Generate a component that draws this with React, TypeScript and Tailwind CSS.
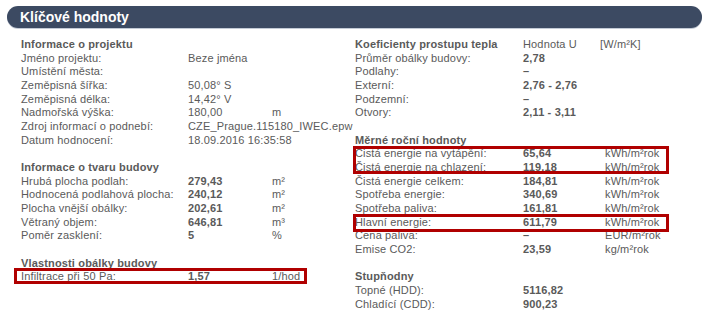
import type { ReactNode } from "react"

type RowProps = {
  label: ReactNode
  value?: ReactNode
  unit?: ReactNode
  bold?: boolean
  labelW: string
  valueW: string
}

function Row({ label, value, unit, bold, labelW, valueW }: RowProps) {
  return (
    <div className="flex h-[13.67px] items-center whitespace-nowrap">
      <div className={labelW}>{label}</div>
      <div className={`${valueW} ${bold ? "font-bold" : ""}`}>{value}</div>
      <div>{unit}</div>
    </div>
  )
}

function Heading({ children }: { children: ReactNode }) {
  return <div className="flex h-[13.67px] items-center whitespace-nowrap font-bold">{children}</div>
}

const Blank = () => <div className="h-[13.67px]" />

// red annotation frame laid over a group of rows
function Marked({ children, frame }: { children: ReactNode; frame: string }) {
  return (
    <div className="relative">
      {children}
      <div className={`pointer-events-none absolute border-[3px] border-[#b00000] ${frame}`} />
    </div>
  )
}

export default function App() {
  const L = { labelW: "w-[167px]", valueW: "w-[84px]" }
  const R = { labelW: "w-[168px]", valueW: "w-[82px]" }

  return (
    <div className="h-[317px] w-[713px] overflow-hidden bg-white font-['Liberation_Sans',Arial,sans-serif] text-[11px] tracking-[0.15px] text-[#5a5a5a]">
      <div className="pl-[7px] pr-[11px] pt-[6px]">
        <div className="flex h-[22px] items-center rounded-full bg-[#3c4a62] pl-[13px] text-[14px] font-bold tracking-normal text-white shadow-[0_1px_0_#c3cad5]">
          Klíčové hodnoty
        </div>
      </div>

      <div className="flex pl-[21px] pt-[9.5px]">
        {/* left column */}
        <div className="w-[334px]">
          <Heading>Informace o projektu</Heading>
          <Row {...L} label="Jméno projektu:" value="Beze jména" />
          <Row {...L} label="Umístění města:" />
          <Row {...L} label="Zeměpisná šířka:" value="50,08° S" />
          <Row {...L} label="Zeměpisná délka:" value="14,42° V" />
          <Row {...L} label="Nadmořská výška:" value="180,00" unit="m" />
          <Row {...L} label="Zdroj informací o podnebí:" value="CZE_Prague.115180_IWEC.epw" />
          <Row {...L} label="Datum hodnocení:" value="18.09.2016 16:35:58" />
          <Blank />
          <Heading>Informace o tvaru budovy</Heading>
          <Row {...L} bold label="Hrubá plocha podlah:" value="279,43" unit="m²" />
          <Row {...L} bold label="Hodnocená podlahová plocha:" value="240,12" unit="m²" />
          <Row {...L} bold label="Plocha vnější obálky:" value="202,61" unit="m²" />
          <Row {...L} bold label="Větraný objem:" value="646,81" unit="m³" />
          <Row {...L} bold label="Poměr zasklení:" value="5" unit="%" />
          <Blank />
          <Heading>Vlastnosti obálky budovy</Heading>
          <Marked frame="-left-[7px] -top-[2px] -bottom-[1px] w-[293px]">
            <Row {...L} bold label="Infiltrace při 50 Pa:" value="1,57" unit="1/hod" />
          </Marked>
        </div>

        {/* right column */}
        <div className="flex-1">
          <div className="flex h-[13.67px] items-center whitespace-nowrap">
            <div className="w-[168px] font-bold">Koeficienty prostupu tepla</div>
            <div className="w-[77px]">Hodnota U</div>
            <div>[W/m²K]</div>
          </div>
          <Row {...R} bold label="Průměr obálky budovy:" value="2,78" />
          <Row {...R} bold label="Podlahy:" value="–" />
          <Row {...R} bold label="Externí:" value="2,76 - 2,76" />
          <Row {...R} bold label="Podzemní:" value="–" />
          <Row {...R} bold label="Otvory:" value="2,11 - 3,11" />
          <Blank />
          <Heading>Měrné roční hodnoty</Heading>
          <Marked frame="-left-[2px] -top-[1px] bottom-0 w-[316px]">
            <Row {...R} bold label="Čistá energie na vytápění:" value="65,64" unit="kWh/m²rok" />
            <Row {...R} bold label="Čistá energie na chlazení:" value="119,18" unit="kWh/m²rok" />
          </Marked>
          <Row {...R} bold label="Čistá energie celkem:" value="184,81" unit="kWh/m²rok" />
          <Row {...R} bold label="Spotřeba energie:" value="340,69" unit="kWh/m²rok" />
          <Row {...R} bold label="Spotřeba paliva:" value="161,81" unit="kWh/m²rok" />
          <Marked frame="-left-[2px] -top-[1px] -bottom-[3px] w-[316px]">
            <Row {...R} bold label="Hlavní energie:" value="611,79" unit="kWh/m²rok" />
          </Marked>
          <Row {...R} bold label="Cena paliva:" value="–" unit="EUR/m²rok" />
          <Row {...R} bold label="Emise CO2:" value="23,59" unit="kg/m²rok" />
          <Blank />
          <Heading>Stupňodny</Heading>
          <Row {...R} bold label="Topné (HDD):" value="5116,82" />
          <Row {...R} bold label="Chladící (CDD):" value="900,23" />
        </div>
      </div>
    </div>
  )
}
